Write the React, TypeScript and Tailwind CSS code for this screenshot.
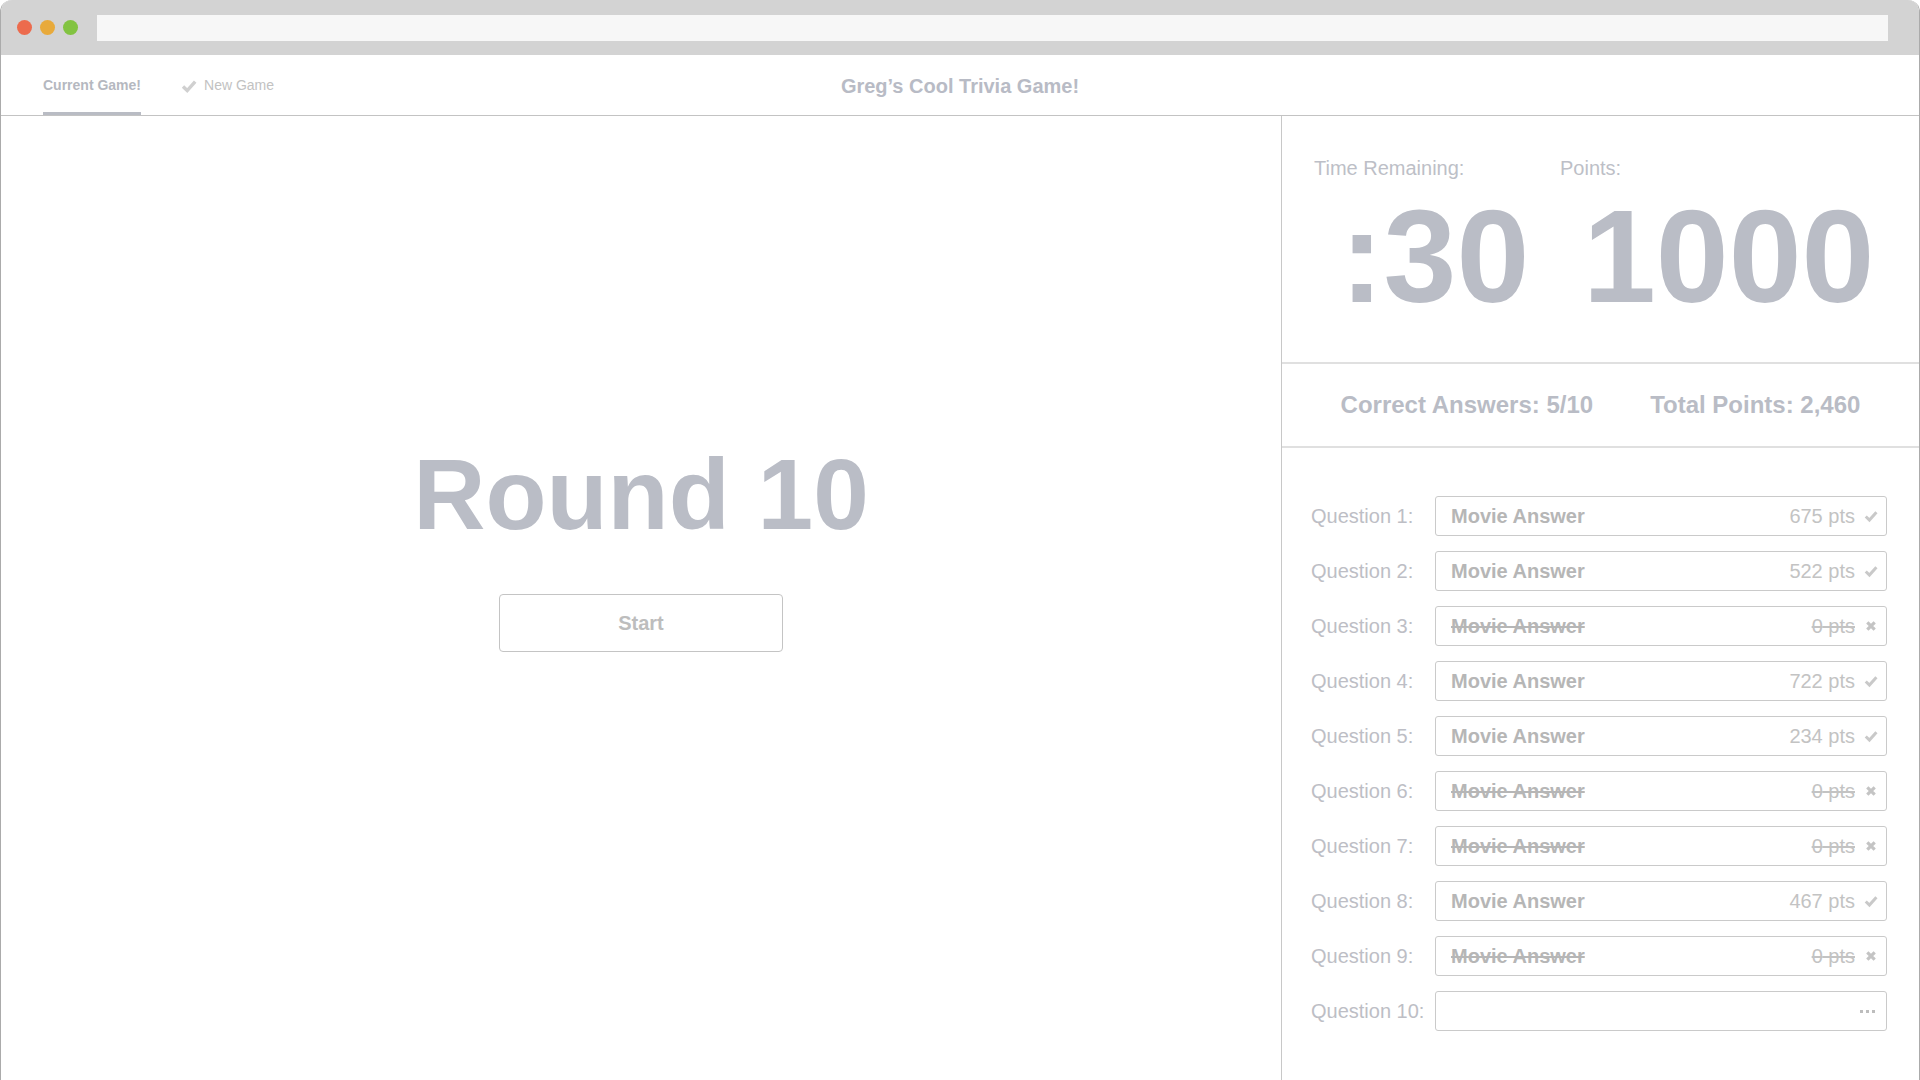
import React from 'react'

type Answer = {
  label: string
  text?: string
  pts?: number
  correct?: boolean
  pending?: boolean
}

const answers: Answer[] = [
  { label: 'Question 1:', text: 'Movie Answer', pts: 675, correct: true },
  { label: 'Question 2:', text: 'Movie Answer', pts: 522, correct: true },
  { label: 'Question 3:', text: 'Movie Answer', pts: 0, correct: false },
  { label: 'Question 4:', text: 'Movie Answer', pts: 722, correct: true },
  { label: 'Question 5:', text: 'Movie Answer', pts: 234, correct: true },
  { label: 'Question 6:', text: 'Movie Answer', pts: 0, correct: false },
  { label: 'Question 7:', text: 'Movie Answer', pts: 0, correct: false },
  { label: 'Question 8:', text: 'Movie Answer', pts: 467, correct: true },
  { label: 'Question 9:', text: 'Movie Answer', pts: 0, correct: false },
  { label: 'Question 10:', pending: true },
]

function Check({ size = 14, color = '#c9c9c9' }: { size?: number; color?: string }) {
  return (
    <svg width={size} height={size} viewBox="0 0 16 16" fill="none">
      <path d="M2 8.6 L6.2 12.6 L14.2 3.6" stroke={color} strokeWidth="3.4" strokeLinejoin="miter" />
    </svg>
  )
}

function Cross() {
  return (
    <svg width="12" height="12" viewBox="0 0 12 12" fill="none">
      <path d="M2.3 2.3 L9.7 9.7 M9.7 2.3 L2.3 9.7" stroke="#c4c4c4" strokeWidth="3.2" />
    </svg>
  )
}

function AnswerRow({ a }: { a: Answer }) {
  return (
    <div className="flex items-center">
      <div className="w-[124px] text-[20px] leading-[24px] text-[#bdbec5]">{a.label}</div>
      <div className="flex h-[40px] w-[452px] items-center rounded-[3px] border border-[#cacaca] pl-[15px] pr-[8px]">
        {a.pending ? (
          <div className="ml-auto flex gap-[3px] pr-[3px]">
            <span className="h-[3px] w-[3px] bg-[#bdbdbd]" />
            <span className="h-[3px] w-[3px] bg-[#bdbdbd]" />
            <span className="h-[3px] w-[3px] bg-[#bdbdbd]" />
          </div>
        ) : (
          <>
            <span className={`text-[20px] font-bold text-[#b6b6b6] ${a.correct ? '' : 'line-through'}`}>
              {a.text}
            </span>
            <span className={`ml-auto text-[20px] text-[#c3c3c3] ${a.correct ? '' : 'line-through'}`}>
              {a.pts} pts
            </span>
            <span className="ml-[9px] flex w-[14px] justify-center">
              {a.correct ? <Check /> : <Cross />}
            </span>
          </>
        )}
      </div>
    </div>
  )
}

export default function App() {
  return (
    <div className="h-[1080px] w-[1920px] overflow-hidden bg-white font-['Liberation_Sans',Arial,sans-serif]">
      <div className="flex h-full flex-col overflow-hidden rounded-t-[12px] border-x border-[#ababab]">
        {/* browser chrome */}
        <div className="flex h-[55px] shrink-0 items-center bg-[#d3d3d3] pl-[16px] pr-[31px]">
          <div className="flex gap-[8px]">
            <span className="h-[15px] w-[15px] rounded-full bg-[#ec6b4d]" />
            <span className="h-[15px] w-[15px] rounded-full bg-[#e8aa3b]" />
            <span className="h-[15px] w-[15px] rounded-full bg-[#82c341]" />
          </div>
          <div className="ml-[19px] h-[26px] flex-1 bg-[#f7f7f7]" />
        </div>

        {/* nav */}
        <div className="grid h-[61px] shrink-0 grid-cols-[1fr_auto_1fr] border-b border-[#c3c3c3] px-[42px]">
          <div className="flex items-stretch gap-[40px]">
            <div className="flex items-center border-b-[3px] border-[#b9bcc4] pt-[4px] text-[14px] font-bold text-[#b5b8c0]">
              Current Game!
            </div>
            <div className="flex items-center gap-[7px] border-b-[3px] border-transparent pt-[4px] text-[14px] text-[#c2c2c2]">
              <Check size={16} color="#d0d0d0" />
              New Game
            </div>
          </div>
          <div className="self-center pt-[1px] text-[20px] font-bold text-[#b8bbc5]">Greg’s Cool Trivia Game!</div>
          <div />
        </div>

        {/* main */}
        <div className="flex min-h-0 flex-1">
          <div className="flex flex-1 flex-col items-center pt-[328px]">
            <div className="text-[100px] font-bold leading-none text-[#babdc6]">Round 10</div>
            <button className="mt-[50px] h-[58px] w-[284px] rounded-[4px] border border-[#c4c4c4] text-[20px] font-bold text-[#bdbdbd]">
              Start
            </button>
          </div>

          <div className="flex w-[638px] shrink-0 flex-col border-l border-[#c8c8c8]">
            <div className="flex h-[248px] border-b-2 border-[#e0e0e0] pl-[32px] pt-[40px]">
              <div className="w-[246px]">
                <div className="text-[20px] leading-[24px] text-[#bdbfc7]">Time Remaining:</div>
                <div className="ml-[26px] mt-[11px] text-[131px] font-bold leading-none text-[#babdc6]">:30</div>
              </div>
              <div>
                <div className="text-[20px] leading-[24px] text-[#bdbfc7]">Points:</div>
                <div className="ml-[23px] mt-[11px] text-[131px] font-bold leading-none text-[#babdc6]">1000</div>
              </div>
            </div>

            <div className="flex h-[84px] items-center justify-center gap-[57px] border-b-2 border-[#e0e0e0] text-[24px] font-bold text-[#b9bcc5]">
              <span>Correct Answers: 5/10</span>
              <span>Total Points: 2,460</span>
            </div>

            <div className="flex flex-col gap-[15px] pl-[29px] pt-[48px]">
              {answers.map((a) => (
                <AnswerRow key={a.label} a={a} />
              ))}
            </div>
          </div>
        </div>
      </div>
    </div>
  )
}
